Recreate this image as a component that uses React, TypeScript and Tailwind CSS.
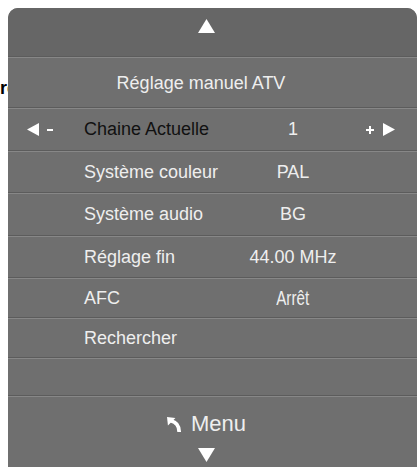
const rows = [
  { label: "Chaine Actuelle", value: "1", active: true, h: "h-[41px]" },
  { label: "Système couleur", value: "PAL", h: "h-[40px]" },
  { label: "Système audio", value: "BG", h: "h-[41px]" },
  { label: "Réglage fin", value: "44.00 MHz", h: "h-[40px]" },
  { label: "AFC", value: "Arrêt", narrow: true, h: "h-[38px]" },
  { label: "Rechercher", value: "", h: "h-[38px]" },
  { label: "", value: "", h: "h-[36px]" },
];

function Divider() {
  return (
    <div className="flex flex-col">
      <div className="h-px bg-[#5c5c5c]" />
      <div className="h-px bg-[#878787]" />
    </div>
  );
}

function Tri({ dir, className }: { dir: "up" | "down" | "left" | "right"; className?: string }) {
  const pts = {
    up: "0,14 8.5,0 17,14",
    down: "0,0 17,0 8.5,14",
    left: "12,0 12,13 0,6.5",
    right: "0,0 0,13 12,6.5",
  }[dir];
  const vb = dir === "up" || dir === "down" ? "0 0 17 14" : "0 0 12 13";
  return (
    <svg viewBox={vb} className={className}>
      <polygon points={pts} fill="#ffffff" />
    </svg>
  );
}

export default function App() {
  return (
    <div className="relative w-[418px] h-[467px] overflow-hidden bg-white font-['Liberation_Sans',Arial,sans-serif]">
      {/* page text hidden behind the menu */}
      <div className="absolute left-0 top-[75px] text-[18px] font-bold text-black">re</div>

      <div className="absolute left-[8px] top-[8px] w-[409px] h-[470px] rounded-[10px] overflow-hidden bg-[#6f6f6f] flex flex-col">
        <div className="h-[48px] bg-[#666666] flex items-start justify-center pt-[11px] pr-[12px]">
          <Tri dir="up" className="w-[17px] h-[14px]" />
        </div>
        <Divider />

        <div className="h-[49px] flex items-center justify-center pr-[23px] pt-[2px] text-[18px] text-[#eeeeee]">
          Réglage manuel ATV
        </div>
        <Divider />

        {rows.map((r, i) => (
          <div key={i} className="flex flex-col">
            <div className={`${r.h} flex items-center text-[18px]`}>
              <div className="w-[76px] flex items-center pl-[19px] gap-[8px]">
                {r.active && (
                  <>
                    <Tri dir="left" className="w-[12px] h-[13px]" />
                    <div className="w-[6px] h-[2px] bg-white" />
                  </>
                )}
              </div>
              <div className={`w-[164px] ${r.active ? "text-[#111111]" : "text-[#eeeeee]"}`}>{r.label}</div>
              <div className="w-[90px] text-center text-[#eeeeee]">
                {r.narrow ? (
                  <span className="inline-block text-[20px] scale-x-[0.76]">{r.value}</span>
                ) : (
                  r.value
                )}
              </div>
              <div className="flex items-center pl-[28px] gap-[9px]">
                {r.active && (
                  <>
                    <svg viewBox="0 0 8 8" className="w-[8px] h-[8px]">
                      <rect x="3" y="0" width="2" height="8" fill="#fff" />
                      <rect x="0" y="3" width="8" height="2" fill="#fff" />
                    </svg>
                    <Tri dir="right" className="w-[12px] h-[13px]" />
                  </>
                )}
              </div>
            </div>
            <Divider />
          </div>
        ))}

        <div className="flex flex-col items-center pt-[16px] pr-[12px]">
          <div className="flex items-center gap-[9px]">
            <svg viewBox="0 0 16 16" className="w-[15px] h-[15px]">
              <polygon points="0,0 9,1 1,9" fill="#fff" />
              <path d="M4 4 Q13 6 13 16" stroke="#fff" strokeWidth="4" fill="none" />
            </svg>
            <span className="text-[22px] text-[#eeeeee] leading-none">Menu</span>
          </div>
          <Tri dir="down" className="w-[17px] h-[14px] mt-[13px]" />
        </div>
      </div>
    </div>
  );
}
